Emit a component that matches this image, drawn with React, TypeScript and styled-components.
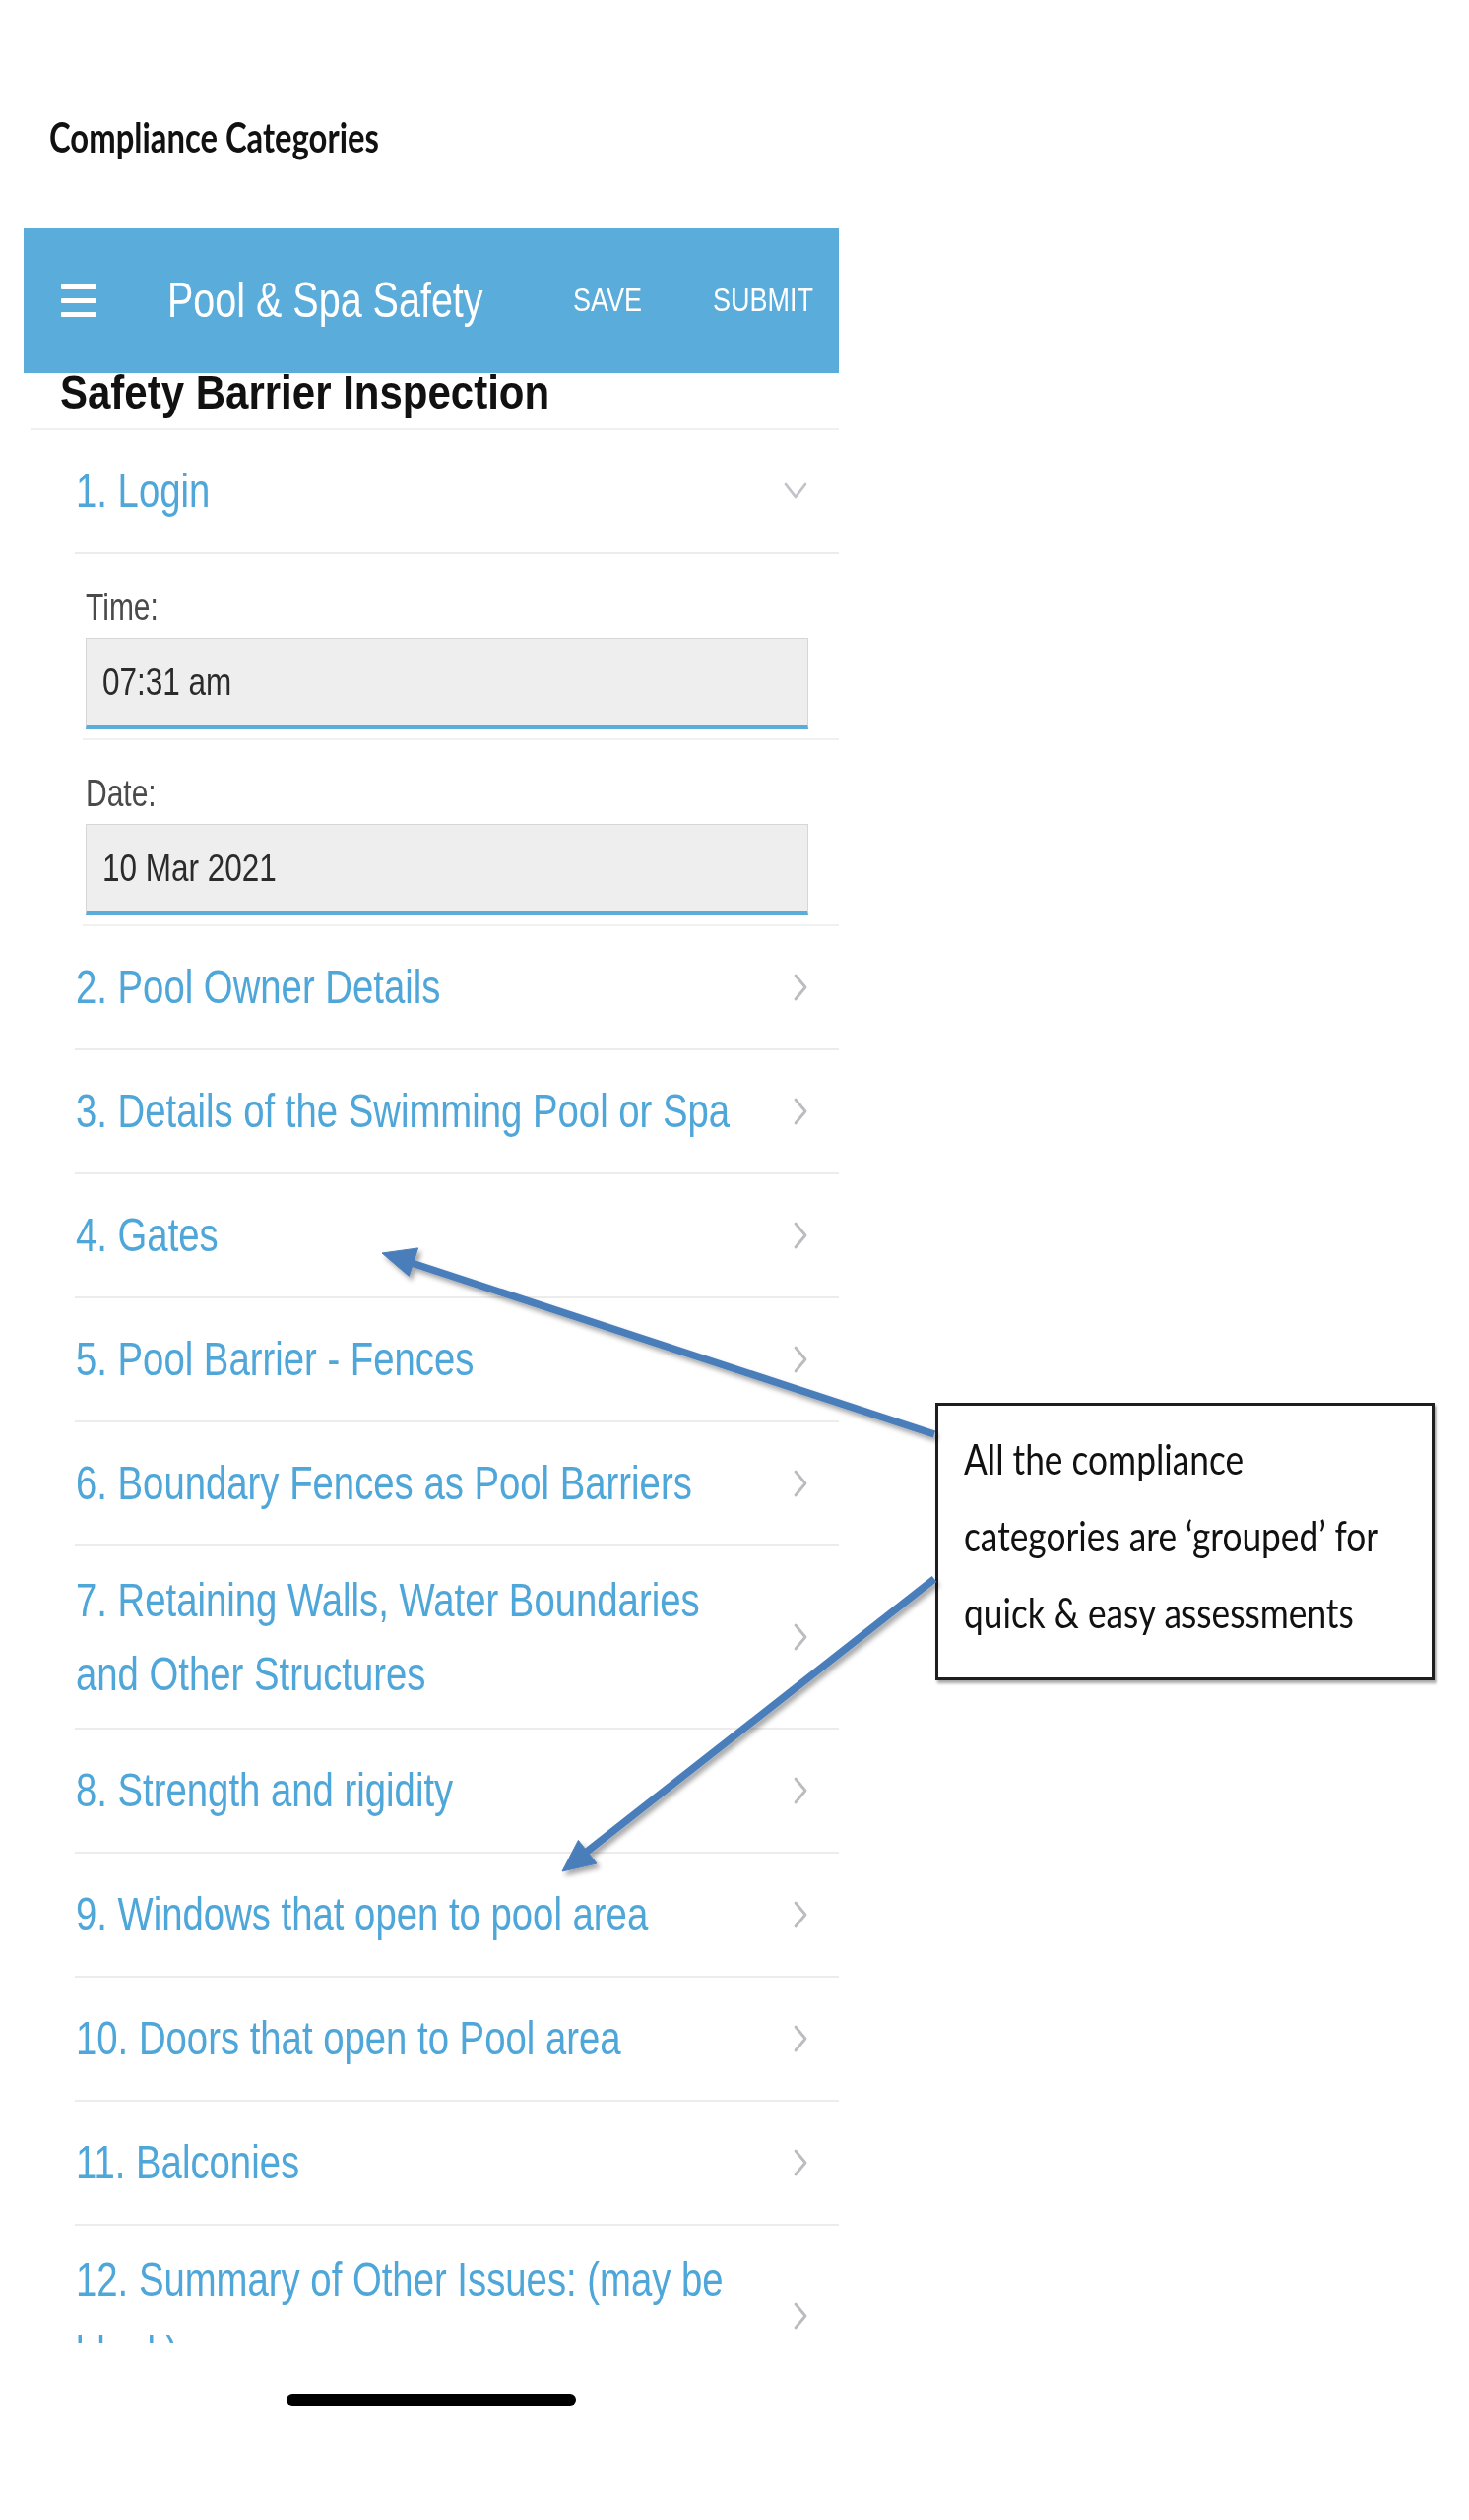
import React from 'react';
import styled, { createGlobalStyle } from 'styled-components';

const GlobalStyle = createGlobalStyle`
  html, body {
    margin: 0;
    padding: 0;
    background: #ffffff;
  }
  body {
    font-family: "Liberation Sans", Arial, sans-serif;
  }
`;

const BLUE = '#5aacda';
const LINK = '#4fa6d8';

const categories = [
  '2. Pool Owner Details',
  '3. Details of the Swimming Pool or Spa',
  '4. Gates',
  '5. Pool Barrier - Fences',
  '6. Boundary Fences as Pool Barriers',
  '7. Retaining Walls, Water Boundaries and Other Structures',
  '8. Strength and rigidity',
  '9. Windows that open to pool area',
  '10. Doors that open to Pool area',
  '11. Balconies',
  '12. Summary of Other Issues: (may be blank)',
];

export default function App() {
  return (
    <Page>
      <GlobalStyle />
      <Heading>Compliance Categories</Heading>

      <Body>
        <Phone>
          <Screen>
            <AppBar>
              <Burger>
                <span />
                <span />
                <span />
              </Burger>
              <BarTitle>Pool &amp; Spa Safety</BarTitle>
              <BarAction>SAVE</BarAction>
              <BarAction>SUBMIT</BarAction>
            </AppBar>

            <SheetTitle>
              <SheetTitleText>Safety Barrier Inspection</SheetTitleText>
            </SheetTitle>

            <List>
              <Row>
                <RowLabel>1. Login</RowLabel>
                <ChevronDown />
              </Row>

              <Field>
                <FieldLabel>Time:</FieldLabel>
                <FieldBox>
                  <FieldValue>07:31 am</FieldValue>
                </FieldBox>
              </Field>
              <Field>
                <FieldLabel>Date:</FieldLabel>
                <FieldBox>
                  <FieldValue>10 Mar 2021</FieldValue>
                </FieldBox>
              </Field>

              {categories.map((c) => (
                <Row key={c}>
                  <RowLabel>{c}</RowLabel>
                  <ChevronRight />
                </Row>
              ))}
            </List>
          </Screen>
          <HomeBar />
        </Phone>

        <Aside>
          <NoteBox>
            <NoteText>
              All the compliance
              <br />
              categories are ‘grouped’ for
              <br />
              quick &amp; easy assessments
            </NoteText>
          </NoteBox>
        </Aside>
      </Body>

      <Arrows />
    </Page>
  );
}

function ChevronRight() {
  return (
    <Chevron width="14" height="28" viewBox="0 0 14 28">
      <path d="M2 2 L12 14 L2 26" />
    </Chevron>
  );
}

function ChevronDown() {
  return (
    <Chevron width="24" height="20" viewBox="0 0 24 20" $light>
      <path d="M2 3 L12 16 L22 3" />
    </Chevron>
  );
}

// callout arrows drawn over the list, in page coordinates
function Arrows() {
  return (
    <Overlay width="1492" height="2560" viewBox="0 0 1492 2560">
      <defs>
        <filter id="arrowShadow" x="-20%" y="-20%" width="140%" height="140%">
          <feDropShadow dx="3" dy="4" stdDeviation="2.5" floodColor="#000" floodOpacity="0.35" />
        </filter>
      </defs>
      <g filter="url(#arrowShadow)" fill="#4a7ebb" stroke="#4a7ebb">
        <line x1="949" y1="1457" x2="418" y2="1283" strokeWidth="7.5" />
        <polygon points="388,1273 424.6,1267.9 415.4,1296.4" strokeWidth="1" />
      </g>
      <g filter="url(#arrowShadow)" fill="#4a7ebb" stroke="#4a7ebb">
        <line x1="949" y1="1604" x2="596" y2="1881" strokeWidth="7.5" />
        <polygon points="571,1901 606.0,1893.0 587.4,1869.4" strokeWidth="1" />
      </g>
    </Overlay>
  );
}

const Page = styled.div`
  position: relative;
  width: 1492px;
  min-height: 2560px;
  overflow: hidden;
`;

const Heading = styled.h1`
  margin: 119px 0 0 50px;
  font-family: Lato, "Open Sans", sans-serif;
  font-weight: 700;
  font-size: 32.8px;
  line-height: 40px;
  color: #111;
  transform: scaleY(1.3);
`;

const Body = styled.div`
  display: flex;
  align-items: flex-start;
  margin-top: 73px;
`;

const Phone = styled.div`
  margin-left: 24px;
  width: 828px;
  display: flex;
  flex-direction: column;
`;

const Screen = styled.div`
  height: 2148px;
  overflow: hidden;
  display: flex;
  flex-direction: column;
`;

const AppBar = styled.header`
  flex: none;
  height: 147px;
  background: ${BLUE};
  display: flex;
  align-items: center;
  padding: 0 26px 0 38px;
  color: #fff;
`;

const Burger = styled.div`
  width: 36px;
  display: flex;
  flex-direction: column;
  gap: 9px;

  span {
    display: block;
    height: 5px;
    background: #fff;
    border-radius: 1px;
  }
`;

const BarTitle = styled.span`
  flex: 1;
  margin-left: 72px;
  font-size: 39.5px;
  transform: scaleY(1.25);
`;

const BarAction = styled.span`
  margin-left: 72px;
  font-size: 27px;
  transform: scaleY(1.25);
`;

const SheetTitle = styled.div`
  flex: none;
  margin-left: 7px;
  padding: 0 0 16px 30px;
  border-bottom: 2px solid #f0f0f0;
`;

const SheetTitleText = styled.div`
  font-size: 42px;
  line-height: 40px;
  font-weight: 700;
  color: #111;
  transform: scaleY(1.15);
`;

const List = styled.div`
  margin-left: 52px;
  display: flex;
  flex-direction: column;
`;

const Row = styled.div`
  flex: none;
  display: flex;
  align-items: center;
  padding: 32px 32px 32px 1px;
  border-bottom: 2px solid #ececec;
`;

const RowLabel = styled.div`
  width: 680px;
  font-size: 38.3px;
  line-height: 60px;
  color: ${LINK};
  transform: scaleY(1.25);
`;

const Chevron = styled.svg<{ $light?: boolean }>`
  flex: none;
  margin-left: auto;

  path {
    fill: none;
    stroke: ${(p) => (p.$light ? '#c2c2c8' : '#bbbbc0')};
    stroke-width: 2.8;
    stroke-linecap: round;
    stroke-linejoin: round;
  }
`;

const Field = styled.div`
  flex: none;
  margin-left: 8px;
  padding: 36px 31px 9px 3px;
  border-bottom: 2px solid #f1f1f1;
`;

const FieldLabel = styled.div`
  font-size: 30px;
  line-height: 36px;
  color: #4a4a4a;
  transform: scaleY(1.28);
`;

const FieldBox = styled.div`
  margin-top: 13px;
  height: 93px;
  box-sizing: border-box;
  display: flex;
  align-items: center;
  padding-left: 16px;
  background: #eeeeee;
  border: 1px solid #d6d6d6;
  border-bottom: 5px solid ${BLUE};
`;

const FieldValue = styled.span`
  font-size: 31.5px;
  color: #2b2b2b;
  transform: scaleY(1.25);
`;

const HomeBar = styled.div`
  margin: 52px auto 0;
  width: 294px;
  height: 12px;
  border-radius: 6px;
  background: #000;
`;

const Aside = styled.aside`
  margin: 1193px 0 0 98px;
  width: 507px;
`;

const NoteBox = styled.div`
  box-sizing: border-box;
  width: 507px;
  padding: 36px 16px 48px 26px;
  border: 3px solid #1e1e1e;
  box-shadow: 2px 3px 3px rgba(0, 0, 0, 0.35);
  background: #fff;
`;

const NoteText = styled.div`
  font-family: Lato, "Open Sans", sans-serif;
  font-size: 35.3px;
  line-height: 64px;
  color: #111;
  white-space: nowrap;
  transform: scaleY(1.22);
`;

const Overlay = styled.svg`
  position: absolute;
  top: 0;
  left: 0;
  pointer-events: none;
`;
